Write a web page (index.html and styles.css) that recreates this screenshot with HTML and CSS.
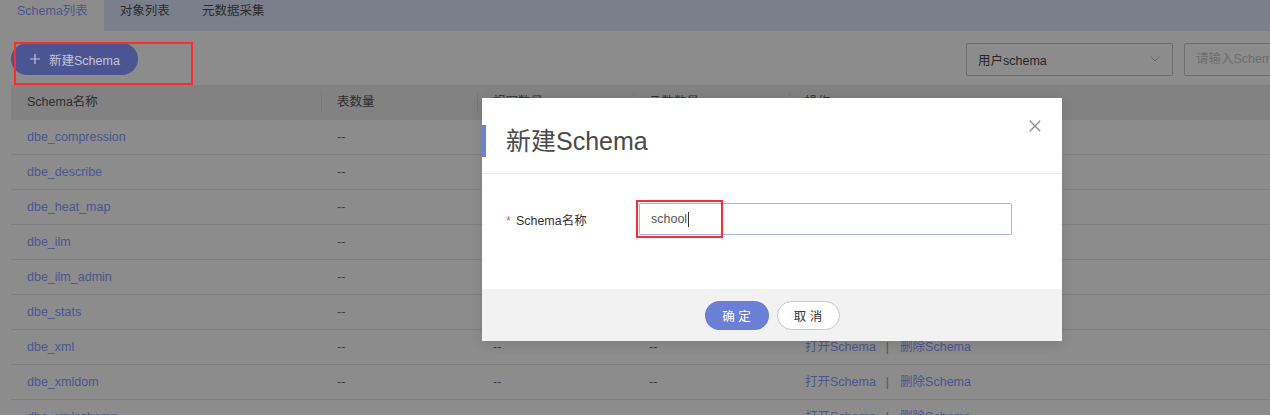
FILE: index.html
```html
<!DOCTYPE html>
<html lang="zh-CN">
<head>
<meta charset="utf-8">
<title>Schema列表</title>
<link rel="stylesheet" href="styles.css">
</head>
<body>
<div class="page">
  <nav class="tabs">
    <a class="tab active">Schema列表</a>
    <a class="tab">对象列表</a>
    <a class="tab">元数据采集</a>
  </nav>
  <div class="toolbar">
    <button class="btn-new" type="button">
      <svg class="plus" width="10" height="10" viewBox="0 0 10 10"><path d="M5 0V10M0 5H10" stroke="currentColor" stroke-width="1.2" fill="none"/></svg>
      <span>新建Schema</span>
    </button>
    <div class="filters">
      <div class="select"><span>用户schema</span><svg width="10" height="6" viewBox="0 0 10 6"><path d="M0.5 0.5L5 5L9.5 0.5" stroke="#666" stroke-width="1" fill="none"/></svg></div>
      <div class="search">请输入Schema名称</div>
    </div>
  </div>
  <table class="grid">
    <colgroup><col class="c1"><col class="c2"><col class="c2"><col class="c2"><col></colgroup>
    <thead>
      <tr><th>Schema名称</th><th>表数量</th><th>视图数量</th><th>函数数量</th><th>操作</th></tr>
    </thead>
    <tbody>
      <tr><td><a class="link">dbe_compression</a></td><td>--</td><td>--</td><td>--</td><td><a class="link">打开Schema</a><span class="sep">|</span><a class="link">删除Schema</a></td></tr>
      <tr><td><a class="link">dbe_describe</a></td><td>--</td><td>--</td><td>--</td><td><a class="link">打开Schema</a><span class="sep">|</span><a class="link">删除Schema</a></td></tr>
      <tr><td><a class="link">dbe_heat_map</a></td><td>--</td><td>--</td><td>--</td><td><a class="link">打开Schema</a><span class="sep">|</span><a class="link">删除Schema</a></td></tr>
      <tr><td><a class="link">dbe_ilm</a></td><td>--</td><td>--</td><td>--</td><td><a class="link">打开Schema</a><span class="sep">|</span><a class="link">删除Schema</a></td></tr>
      <tr><td><a class="link">dbe_ilm_admin</a></td><td>--</td><td>--</td><td>--</td><td><a class="link">打开Schema</a><span class="sep">|</span><a class="link">删除Schema</a></td></tr>
      <tr><td><a class="link">dbe_stats</a></td><td>--</td><td>--</td><td>--</td><td><a class="link">打开Schema</a><span class="sep">|</span><a class="link">删除Schema</a></td></tr>
      <tr><td><a class="link">dbe_xml</a></td><td>--</td><td>--</td><td>--</td><td><a class="link">打开Schema</a><span class="sep">|</span><a class="link">删除Schema</a></td></tr>
      <tr><td><a class="link">dbe_xmldom</a></td><td>--</td><td>--</td><td>--</td><td><a class="link">打开Schema</a><span class="sep">|</span><a class="link">删除Schema</a></td></tr>
      <tr><td><a class="link">dbe_xmlschema</a></td><td>--</td><td>--</td><td>--</td><td><a class="link">打开Schema</a><span class="sep">|</span><a class="link">删除Schema</a></td></tr>
    </tbody>
  </table>
</div>

<div class="dialog">
  <div class="dialog-head">
    <h2 class="dialog-title">新建Schema</h2>
    <svg class="close" width="12" height="12" viewBox="0 0 12 12"><path d="M0.8 0.8L11.2 11.2M11.2 0.8L0.8 11.2" stroke="#8a8a8a" stroke-width="1.3" fill="none"/></svg>
  </div>
  <div class="dialog-body">
    <div class="form-row">
      <label class="form-label"><span class="req">*</span>Schema名称</label>
      <div class="input">school<span class="caret"></span></div>
    </div>
  </div>
  <div class="dialog-foot">
    <button class="btn btn-primary" type="button">确 定</button>
    <button class="btn btn-default" type="button">取 消</button>
  </div>
</div>

<div class="mark mark-new"></div>
<div class="mark mark-input"></div>
</body>
</html>
```

FILE: styles.css
```css
* { box-sizing: border-box; }
html, body { margin: 0; padding: 0; }
body {
  width: 1270px;
  height: 415px;
  overflow: hidden;
  position: relative;
  background: #8c8c8c;
  font-family: "Liberation Sans", "Noto Sans CJK SC", sans-serif;
  font-size: 12.5px;
  color: #2b2b2b;
}
.page { width: 1400px; }

/* tabs */
.tabs { display: flex; height: 31px; background: #7b7f8c; }
.tab { padding: 0 16px; line-height: 22px; color: #2b2b2b; }
.tab.active { background: #8c8c8c; color: #4d5590; padding-left: 17px; }

/* toolbar */
.toolbar {
  display: flex;
  justify-content: space-between;
  align-items: center;
  height: 54px;
  padding: 2px 16px 0 11px;
}
.btn-new {
  display: flex;
  align-items: center;
  gap: 9px;
  height: 32px;
  padding: 0 18px 0 19px;
  border: 0;
  border-radius: 16px;
  background: #4b5592;
  color: #c3c5d3;
  font-family: inherit;
  font-size: 12.5px;
}
.filters { display: flex; gap: 11px; }
.select {
  width: 207px;
  height: 33px;
  border: 1px solid #6f6f6f;
  border-radius: 2px;
  display: flex;
  align-items: center;
  justify-content: space-between;
  padding: 0 12px 0 11px;
  color: #262626;
}
.search {
  width: 200px;
  height: 33px;
  border: 1px solid #6f6f6f;
  border-radius: 2px;
  padding-left: 11px;
  line-height: 31px;
  color: #6e6e6e;
}

/* table */
.grid {
  margin-left: 11px;
  width: 1389px;
  border-collapse: separate;
  border-spacing: 0;
  table-layout: fixed;
}
.grid .c1 { width: 310px; }
.grid .c2 { width: 156px; }
.grid th {
  position: relative;
  background: #828282;
  font-weight: normal;
  text-align: left;
  padding: 0 16px;
  line-height: 35px;
  color: #2e2e2e;
}
.grid th + th::before {
  content: "";
  position: absolute;
  left: 0;
  top: 8px;
  bottom: 7px;
  width: 1px;
  background: #787878;
}
.grid td {
  padding: 0 16px;
  line-height: 34px;
  border-bottom: 1px solid #7f7f7f;
  color: #404040;
  white-space: nowrap;
}
.link { color: #4d5590; }
.sep { margin: 0 11px 0 10px; color: #555; }

/* dialog */
.dialog {
  position: absolute;
  left: 482px;
  top: 98px;
  width: 580px;
  background: #fff;
  box-shadow: 0 2px 12px rgba(0, 0, 0, 0.12);
}
.dialog-head {
  position: relative;
  height: 76px;
  padding-top: 27px;
  border-bottom: 1px solid #ececec;
}
.dialog-title {
  margin: 0;
  border-left: 4px solid #6b7fd6;
  padding-left: 20px;
  font-size: 25px;
  line-height: 32px;
  font-weight: normal;
  color: #4a4a4a;
}
.close { position: absolute; right: 21px; top: 22px; }
.dialog-body { height: 115px; padding: 29px 50px 0 24px; }
.form-row { display: flex; align-items: center; }
.form-label { width: 133px; color: #333; }
.req { color: #e0606e; margin-right: 5px; }
.input {
  flex: 1;
  height: 32px;
  border: 1px solid #a7b2e6;
  border-radius: 2px;
  padding-left: 11px;
  line-height: 30px;
  color: #555;
}
.caret {
  display: inline-block;
  width: 1px;
  height: 15px;
  margin-left: 1px;
  background: #333;
  vertical-align: middle;
}
.dialog-foot {
  height: 52px;
  background: #f2f2f2;
  display: flex;
  justify-content: center;
  gap: 8px;
  padding-top: 12px;
}
.btn {
  height: 29px;
  border-radius: 15px;
  font-family: inherit;
  font-size: 12.5px;
  padding: 0;
}
.btn-primary { width: 64px; background: #6b7fd6; border: 0; color: #fff; }
.btn-default { width: 63px; background: #fff; border: 1px solid #c8c8c8; color: #333; }

/* annotation boxes */
.mark { position: absolute; border: 2px solid #ff2b2b; }
.mark-new { left: 14px; top: 42px; width: 179px; height: 43px; }
.mark-input { left: 636px; top: 200px; width: 87px; height: 38px; }
```
